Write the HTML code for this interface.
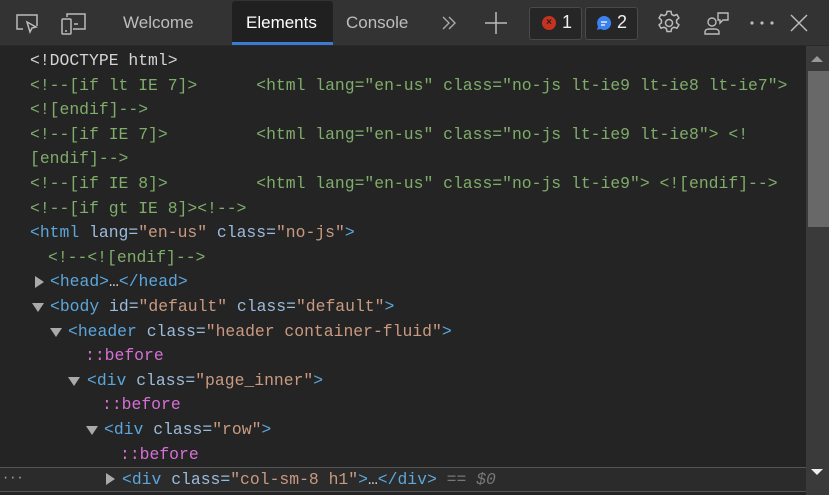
<!DOCTYPE html>
<html><head><style>
body{margin:0;width:829px;height:495px;overflow:hidden;background:#242424;font-family:"Liberation Sans",sans-serif;position:relative}
.tb{position:absolute;left:0;top:0;width:829px;height:45px;background:#333;border-bottom:1px solid #2a2a2a}
.tab{position:absolute;top:0;height:45px;line-height:45px;font-size:17px;color:#bdbdbd}
.code{position:absolute;left:0;top:49px;width:806px;font-family:"Liberation Mono",monospace;font-size:16.4px;color:#d4d4d4}
.r{height:24.6px;line-height:24.6px;white-space:pre;position:relative}
.c{color:#7fad6a}.t{color:#5ca6dc}.a{color:#9bbbdc}.v{color:#c99a80}.p{color:#d670d6}.g{color:#d4d4d4}
.tri{position:absolute;top:8px;width:0;height:0}
.dn{border-left:6px solid transparent;border-right:6px solid transparent;border-top:9px solid #aaa}
.rt{border-top:6px solid transparent;border-bottom:6px solid transparent;border-left:9px solid #aaa;top:6px}
.sel{background:#2b2b2b;border-top:1px solid #555;border-bottom:1px solid #555;height:22.6px}
.sb{position:absolute;left:806px;top:46px;width:23px;height:449px;background:#3a3a3a}
</style></head><body>
<div class="tb">
<svg style="position:absolute;left:14px;top:12px" width="26" height="24" viewBox="0 0 26 24" fill="none" stroke="#bbb" stroke-width="1.5"><path d="M9 17H3V3h20v11"/><path d="M13 10l9 5-4 1-2 4z"/></svg>
<svg style="position:absolute;left:60px;top:12px" width="28" height="24" viewBox="0 0 28 24" fill="none" stroke="#bbb" stroke-width="1.5"><rect x="2" y="7" width="9" height="15" rx="1"/><path d="M7 5V2h18v15H13"/><path d="M14 12h4"/><path d="M5 19h2"/></svg>
<div class="tab" style="left:123px">Welcome</div>
<div style="position:absolute;left:232px;top:1px;width:101px;height:43px;background:#202020;border-radius:3px 3px 0 0"></div>
<div style="position:absolute;left:232px;top:42px;width:101px;height:3px;background:#3a7bd5"></div>
<div class="tab" style="left:246px;color:#fff">Elements</div>
<div class="tab" style="left:346px">Console</div>
<svg style="position:absolute;left:441px;top:15px" width="16" height="16" viewBox="0 0 16 16" fill="none" stroke="#aaa" stroke-width="1.4"><path d="M2 2l6 6-6 6M8 2l6 6-6 6"/></svg>
<svg style="position:absolute;left:484px;top:11px" width="24" height="24" viewBox="0 0 24 24" stroke="#bbb" stroke-width="1.5"><path d="M12 1v22M1 12h22"/></svg>
<div style="position:absolute;left:529px;top:7px;width:51px;height:31px;border:1px solid #4a4a4a;border-radius:3px;background:#262626"></div>
<div style="position:absolute;left:542px;top:16px;width:14px;height:14px;border-radius:50%;background:#c4331f;color:#222;font-size:10px;line-height:14px;text-align:center;font-weight:bold">×</div>
<div class="tab" style="left:562px;color:#eee;font-size:18px">1</div>
<div style="position:absolute;left:585px;top:7px;width:51px;height:31px;border:1px solid #4a4a4a;border-radius:3px;background:#262626"></div>
<svg style="position:absolute;left:596px;top:15px" width="16" height="16" viewBox="0 0 16 16"><path d="M8 1a7 7 0 1 1-3.5 13L1 15l1-3.5A7 7 0 0 1 8 1z" fill="#3b82f0"/><path d="M5 7h6M5 10h4" stroke="#fff" stroke-width="1.2"/></svg>
<div class="tab" style="left:617px;color:#eee;font-size:18px">2</div>
<svg style="position:absolute;left:655px;top:9px" width="28" height="28" viewBox="0 0 24 24" fill="none" stroke="#bbb" stroke-width="1.3"><circle cx="12" cy="12" r="3"/><path d="M10.3 2h3.4l.6 2.6 2 1.1 2.5-.9 1.7 2.9-2 1.8v2.3l2 1.8-1.7 2.9-2.5-.9-2 1.1-.6 2.6h-3.4l-.6-2.6-2-1.1-2.5.9-1.7-2.9 2-1.8V9.5l-2-1.8 1.7-2.9 2.5.9 2-1.1z"/></svg>
<svg style="position:absolute;left:703px;top:9px" width="28" height="28" viewBox="0 0 28 26" fill="none" stroke="#bbb" stroke-width="1.4"><circle cx="9" cy="12" r="4"/><path d="M2 24v-2c0-2 2-3 4-3h6c2 0 4 1 4 3v2z"/><path d="M15 3h10v7h-5l-3 3v-3h-2z"/></svg>
<svg style="position:absolute;left:749px;top:20px" width="26" height="6"><circle cx="3" cy="3" r="1.6" fill="#bbb"/><circle cx="13" cy="3" r="1.6" fill="#bbb"/><circle cx="23" cy="3" r="1.6" fill="#bbb"/></svg>
<svg style="position:absolute;left:789px;top:13px" width="20" height="20" viewBox="0 0 20 20" stroke="#bbb" stroke-width="1.5"><path d="M2 2l16 16M18 2L2 18"/></svg>
</div>
<div class="code">
<div class="r" style="padding-left:30px"><span class="g">&lt;!DOCTYPE html&gt;</span></div>
<div class="r c" style="padding-left:30px">&lt;!--[if lt IE 7]&gt;      &lt;html lang="en-us" class="no-js lt-ie9 lt-ie8 lt-ie7"&gt;</div>
<div class="r c" style="padding-left:30px">&lt;![endif]--&gt;</div>
<div class="r c" style="padding-left:30px">&lt;!--[if IE 7]&gt;         &lt;html lang="en-us" class="no-js lt-ie9 lt-ie8"&gt; &lt;!</div>
<div class="r c" style="padding-left:30px">[endif]--&gt;</div>
<div class="r c" style="padding-left:30px">&lt;!--[if IE 8]&gt;         &lt;html lang="en-us" class="no-js lt-ie9"&gt; &lt;![endif]--&gt;</div>
<div class="r c" style="padding-left:30px">&lt;!--[if gt IE 8]&gt;&lt;!--&gt;</div>
<div class="r" style="padding-left:30px"><span class="t">&lt;html </span><span class="a">lang=</span><span class="v">"en-us"</span> <span class="a">class=</span><span class="v">"no-js"</span><span class="t">&gt;</span></div>
<div class="r c" style="padding-left:48px">&lt;!--&lt;![endif]--&gt;</div>
<div class="r" style="padding-left:50px"><i class="tri rt" style="left:35px"></i><span class="t">&lt;head&gt;</span><span class="g">…</span><span class="t">&lt;/head&gt;</span></div>
<div class="r" style="padding-left:50px"><i class="tri dn" style="left:32px"></i><span class="t">&lt;body </span><span class="a">id=</span><span class="v">"default"</span> <span class="a">class=</span><span class="v">"default"</span><span class="t">&gt;</span></div>
<div class="r" style="padding-left:68px"><i class="tri dn" style="left:50px"></i><span class="t">&lt;header </span><span class="a">class=</span><span class="v">"header container-fluid"</span><span class="t">&gt;</span></div>
<div class="r p" style="padding-left:85px">::before</div>
<div class="r" style="padding-left:87px"><i class="tri dn" style="left:68px"></i><span class="t">&lt;div </span><span class="a">class=</span><span class="v">"page_inner"</span><span class="t">&gt;</span></div>
<div class="r p" style="padding-left:102px">::before</div>
<div class="r" style="padding-left:104px"><i class="tri dn" style="left:86px"></i><span class="t">&lt;div </span><span class="a">class=</span><span class="v">"row"</span><span class="t">&gt;</span></div>
<div class="r p" style="padding-left:120px">::before</div>
<div class="r sel" style="padding-left:122px"><span style="position:absolute;left:2px;top:-2px;color:#aaa;font-size:12px">···</span><i class="tri rt" style="left:106px;top:5px"></i><span class="t">&lt;div </span><span class="a">class=</span><span class="v">"col-sm-8 h1"</span><span class="t">&gt;</span><span class="g">…</span><span class="t">&lt;/div&gt;</span> <i style="color:#777">== $0</i></div>
</div>
<div class="sb">
<div style="position:absolute;left:5px;top:10px;border-left:6px solid transparent;border-right:6px solid transparent;border-bottom:6px solid #999"></div>
<div style="position:absolute;left:2px;top:25px;width:21px;height:156px;background:#686868"></div>
<div style="position:absolute;left:5px;top:423px;border-left:6px solid transparent;border-right:6px solid transparent;border-top:6px solid #eee"></div>
</div>
</body></html>
